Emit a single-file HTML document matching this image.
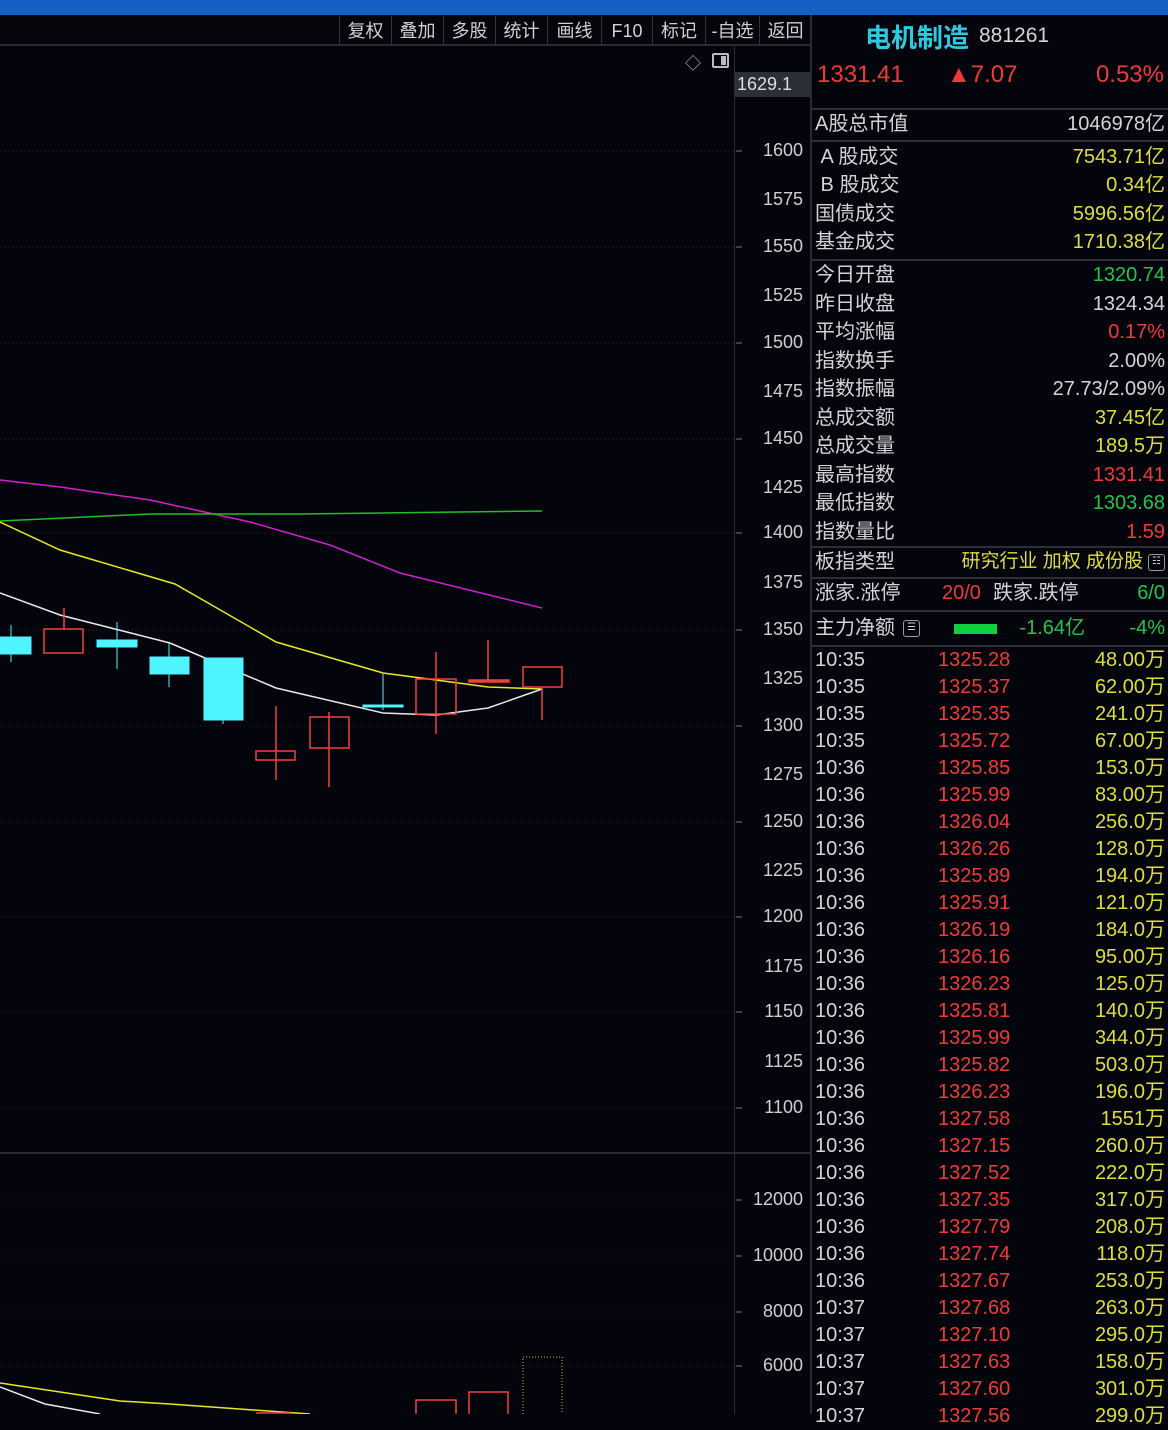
<!DOCTYPE html>
<html><head><meta charset="utf-8"><style>
*{margin:0;padding:0;box-sizing:border-box}
body{width:1168px;height:1414px;background:#04050c;overflow:hidden;position:relative;font-family:"Liberation Sans","Noto Sans CJK SC",sans-serif;color:#d4d4d4}
.a{position:absolute;white-space:nowrap}
.r{position:absolute;left:815px;width:350px;height:28px;font-size:20px;line-height:28px}
.r .l{position:absolute;left:0}
.r .v{position:absolute;right:0}
.y{color:#dede3a}.rd{color:#f03a3a}.g{color:#22c44a}
.tb{position:absolute;top:16px;height:30px;font-size:18px;line-height:30px;color:#d0d0d0;border-left:1px solid #333;text-align:center}
.ax{position:absolute;right:365px;font-size:18px;color:#cfcfcf}
.hl{position:absolute;left:812px;width:356px;height:2px;background:#2e2e36}
</style></head><body>
<div class="a" style="left:0;top:0;width:1168px;height:15px;background:#1560c3"></div>
<div class="a" style="left:0;top:15px;width:812px;height:31px;background:#05060b;border-bottom:2px solid #2a2a30"></div>
<div class="tb" style="left:339px;width:52px">复权</div>
<div class="tb" style="left:391px;width:52px">叠加</div>
<div class="tb" style="left:443px;width:52px">多股</div>
<div class="tb" style="left:495px;width:52px">统计</div>
<div class="tb" style="left:547px;width:54px">画线</div>
<div class="tb" style="left:601px;width:51px">F10</div>
<div class="tb" style="left:652px;width:53px">标记</div>
<div class="tb" style="left:705px;width:54px">-自选</div>
<div class="tb" style="left:759px;width:53px;border-right:1px solid #333">返回</div>
<div class="a" style="left:734px;top:46px;width:1px;height:1368px;background:#2a2a30"></div>
<div class="a" style="left:810px;top:15px;width:2px;height:1399px;background:#2a2a30"></div>
<div class="a" style="left:0;top:1152px;width:810px;height:2px;background:#2a2a30"></div>
<div class="a" style="left:685px;top:50px;font-size:16px;color:#aaa">◇</div>
<div class="a" style="left:712px;top:53px;width:17px;height:15px;border:2px solid #bbb;border-radius:2px"><div style="position:absolute;right:1px;top:1px;width:5px;height:9px;background:#bbb"></div></div>
<div class="a" style="left:735px;top:72px;width:75px;height:25px;background:#2c2f36;font-size:18px;line-height:25px;padding-left:2px;color:#ddd">1629.1</div>
<svg class="a" style="left:0;top:0" width="812" height="1414">
<g stroke="#2a2a34" stroke-dasharray="1,3" stroke-width="1">
<line x1="0" x2="734" y1="151" y2="151"/><line x1="0" x2="734" y1="247" y2="247"/><line x1="0" x2="734" y1="343" y2="343"/><line x1="0" x2="734" y1="439" y2="439"/><line x1="0" x2="734" y1="533" y2="533"/><line x1="0" x2="734" y1="630" y2="630"/><line x1="0" x2="734" y1="726" y2="726"/><line x1="0" x2="734" y1="822" y2="822"/><line x1="0" x2="734" y1="917" y2="917"/><line x1="0" x2="734" y1="1012" y2="1012"/><line x1="0" x2="734" y1="1108" y2="1108"/>
<line x1="0" x2="734" y1="1200" y2="1200"/><line x1="0" x2="734" y1="1256" y2="1256"/><line x1="0" x2="734" y1="1312" y2="1312"/><line x1="0" x2="734" y1="1366" y2="1366"/>
</g>
<g stroke="#777" stroke-width="1">
<line x1="736" x2="742" y1="151" y2="151"/><line x1="736" x2="742" y1="247" y2="247"/><line x1="736" x2="742" y1="343" y2="343"/><line x1="736" x2="742" y1="439" y2="439"/><line x1="736" x2="742" y1="533" y2="533"/><line x1="736" x2="742" y1="630" y2="630"/><line x1="736" x2="742" y1="726" y2="726"/><line x1="736" x2="742" y1="822" y2="822"/><line x1="736" x2="742" y1="917" y2="917"/><line x1="736" x2="742" y1="1012" y2="1012"/><line x1="736" x2="742" y1="1108" y2="1108"/>
<line x1="736" x2="742" y1="1200" y2="1200"/><line x1="736" x2="742" y1="1256" y2="1256"/><line x1="736" x2="742" y1="1312" y2="1312"/><line x1="736" x2="742" y1="1366" y2="1366"/>
</g>
<polyline fill="none" stroke="#d020d0" stroke-width="1.5" points="0,480 60,487 150,500 250,522 330,545 400,573 542,608"/>
<polyline fill="none" stroke="#20c020" stroke-width="1.5" points="0,521 150,514 300,514 542,511"/>
<polyline fill="none" stroke="#e8e820" stroke-width="1.5" points="0,522 60,550 175,584 276,642 383,673 436,680 488,687 542,689"/>
<polyline fill="none" stroke="#e8e8e8" stroke-width="1.5" points="0,593 60,615 170,643 205,658 276,688 383,713 436,715 488,708 542,689"/>
<g fill="#4ef4ff" stroke="#4ef4ff">
<line x1="11" x2="11" y1="625" y2="662"/><rect x="0" y="637" width="31" height="17"/>
<line x1="117" x2="117" y1="622" y2="669"/><rect x="97" y="640" width="40" height="7"/>
<line x1="169" x2="169" y1="643" y2="687"/><rect x="150" y="657" width="39" height="17"/>
<line x1="223" x2="223" y1="658" y2="724"/><rect x="204" y="658" width="39" height="62"/>
<line x1="383" x2="383" y1="673" y2="710"/><rect x="363" y="705" width="40" height="2"/>
</g>
<g fill="none" stroke="#f04040" stroke-width="1.5">
<line x1="64" x2="64" y1="608" y2="629"/><rect x="44" y="629" width="39" height="24"/>
<line x1="276" x2="276" y1="706" y2="780"/><rect x="256" y="751" width="39" height="9"/>
<line x1="329" x2="329" y1="712" y2="787"/><rect x="310" y="717" width="39" height="31"/>
<line x1="436" x2="436" y1="652" y2="734"/><rect x="416" y="679" width="40" height="35"/>
<line x1="488" x2="488" y1="640" y2="682"/><rect x="469" y="680" width="40" height="2" fill="#f04040"/>
<line x1="542" x2="542" y1="687" y2="720"/><rect x="523" y="667" width="39" height="20"/>
</g>
<polyline fill="none" stroke="#e8e820" stroke-width="1.5" points="0,1383 120,1401 170,1404 310,1414"/>
<polyline fill="none" stroke="#e8e8e8" stroke-width="1.5" points="0,1387 45,1404 100,1414"/>
<g fill="none" stroke="#f04040" stroke-width="1.5"><rect x="257" y="1413" width="33" height="5"/><rect x="416" y="1400" width="40" height="20"/><rect x="469" y="1392" width="39" height="30"/></g>
<rect x="523" y="1357" width="39" height="60" fill="none" stroke="#c8c830" stroke-dasharray="1,2"/>
</svg>
<div class="ax" style="top:140px">1600</div><div class="ax" style="top:189px">1575</div><div class="ax" style="top:236px">1550</div><div class="ax" style="top:285px">1525</div><div class="ax" style="top:332px">1500</div><div class="ax" style="top:381px">1475</div><div class="ax" style="top:428px">1450</div><div class="ax" style="top:477px">1425</div><div class="ax" style="top:522px">1400</div><div class="ax" style="top:572px">1375</div><div class="ax" style="top:619px">1350</div><div class="ax" style="top:668px">1325</div><div class="ax" style="top:715px">1300</div><div class="ax" style="top:764px">1275</div><div class="ax" style="top:811px">1250</div><div class="ax" style="top:860px">1225</div><div class="ax" style="top:906px">1200</div><div class="ax" style="top:956px">1175</div><div class="ax" style="top:1001px">1150</div><div class="ax" style="top:1051px">1125</div><div class="ax" style="top:1097px">1100</div>
<div class="ax" style="top:1189px">12000</div><div class="ax" style="top:1245px">10000</div><div class="ax" style="top:1301px">8000</div><div class="ax" style="top:1355px">6000</div>

<div class="a" style="left:865px;top:18px;font-size:26px;color:#2ec8e0;font-weight:bold">电机制造</div>
<div class="a" style="left:979px;top:24px;font-size:21px;color:#d4d4d4">881261</div>
<div class="a rd" style="left:817px;top:61px;font-size:24px">1331.41</div>
<div class="a rd" style="left:947px;top:61px;font-size:24px">▲7.07</div>
<div class="a rd" style="right:4px;top:61px;font-size:24px">0.53%</div>
<div class="hl" style="top:108px"></div>
<div class="r" style="top:110px"><span class="l">A股总市值</span><span class="v">1046978亿</span></div>
<div class="hl" style="top:140px"></div>
<div class="r" style="top:143px"><span class="l">&nbsp;A 股成交</span><span class="v y">7543.71亿</span></div>
<div class="r" style="top:171px"><span class="l">&nbsp;B 股成交</span><span class="v y">0.34亿</span></div>
<div class="r" style="top:200px"><span class="l">国债成交</span><span class="v y">5996.56亿</span></div>
<div class="r" style="top:228px"><span class="l">基金成交</span><span class="v y">1710.38亿</span></div>
<div class="hl" style="top:259px"></div>
<div class="r" style="top:261px"><span class="l">今日开盘</span><span class="v g">1320.74</span></div>
<div class="r" style="top:290px"><span class="l">昨日收盘</span><span class="v">1324.34</span></div>
<div class="r" style="top:318px"><span class="l">平均涨幅</span><span class="v rd">0.17%</span></div>
<div class="r" style="top:347px"><span class="l">指数换手</span><span class="v">2.00%</span></div>
<div class="r" style="top:375px"><span class="l">指数振幅</span><span class="v">27.73/2.09%</span></div>
<div class="r" style="top:404px"><span class="l">总成交额</span><span class="v y">37.45亿</span></div>
<div class="r" style="top:432px"><span class="l">总成交量</span><span class="v y">189.5万</span></div>
<div class="r" style="top:461px"><span class="l">最高指数</span><span class="v rd">1331.41</span></div>
<div class="r" style="top:489px"><span class="l">最低指数</span><span class="v g">1303.68</span></div>
<div class="r" style="top:518px"><span class="l">指数量比</span><span class="v rd">1.59</span></div>
<div class="hl" style="top:546px"></div>
<div class="r" style="top:548px"><span class="l">板指类型</span><span class="v y" style="right:22px;font-size:19px">研究行业 加权 成份股</span><span class="v" style="top:6px;width:17px;height:17px;border:1px solid #999;border-radius:3px;font-size:10px;line-height:14px;text-align:center">☷</span></div>
<div class="hl" style="top:577px"></div>
<div class="r" style="top:579px"><span class="l">涨家.涨停</span><span class="v rd" style="right:auto;left:127px">20/0</span><span class="v" style="right:auto;left:178px">跌家.跌停</span><span class="v g">6/0</span></div>
<div class="hl" style="top:610px"></div>
<div class="r" style="top:614px"><span class="l">主力净额</span><span class="v" style="right:auto;left:88px;top:6px;width:17px;height:17px;border:1px solid #999;border-radius:3px;font-size:10px;line-height:14px;text-align:center">☰</span><span class="v" style="right:auto;left:139px;top:10px;width:43px;height:10px;background:#10d040"></span><span class="v g" style="right:80px">-1.64亿</span><span class="v g">-4%</span></div>
<div class="hl" style="top:645px"></div>
<div class="a" style="left:815px;top:647px;width:350px;font-size:20px;line-height:27px">
<div style="display:flex"><span style="width:123px">10:35</span><span class="rd" style="width:100px">1325.28</span><span class="y" style="flex:1;text-align:right">48.00万</span></div>
<div style="display:flex"><span style="width:123px">10:35</span><span class="rd" style="width:100px">1325.37</span><span class="y" style="flex:1;text-align:right">62.00万</span></div>
<div style="display:flex"><span style="width:123px">10:35</span><span class="rd" style="width:100px">1325.35</span><span class="y" style="flex:1;text-align:right">241.0万</span></div>
<div style="display:flex"><span style="width:123px">10:35</span><span class="rd" style="width:100px">1325.72</span><span class="y" style="flex:1;text-align:right">67.00万</span></div>
<div style="display:flex"><span style="width:123px">10:36</span><span class="rd" style="width:100px">1325.85</span><span class="y" style="flex:1;text-align:right">153.0万</span></div>
<div style="display:flex"><span style="width:123px">10:36</span><span class="rd" style="width:100px">1325.99</span><span class="y" style="flex:1;text-align:right">83.00万</span></div>
<div style="display:flex"><span style="width:123px">10:36</span><span class="rd" style="width:100px">1326.04</span><span class="y" style="flex:1;text-align:right">256.0万</span></div>
<div style="display:flex"><span style="width:123px">10:36</span><span class="rd" style="width:100px">1326.26</span><span class="y" style="flex:1;text-align:right">128.0万</span></div>
<div style="display:flex"><span style="width:123px">10:36</span><span class="rd" style="width:100px">1325.89</span><span class="y" style="flex:1;text-align:right">194.0万</span></div>
<div style="display:flex"><span style="width:123px">10:36</span><span class="rd" style="width:100px">1325.91</span><span class="y" style="flex:1;text-align:right">121.0万</span></div>
<div style="display:flex"><span style="width:123px">10:36</span><span class="rd" style="width:100px">1326.19</span><span class="y" style="flex:1;text-align:right">184.0万</span></div>
<div style="display:flex"><span style="width:123px">10:36</span><span class="rd" style="width:100px">1326.16</span><span class="y" style="flex:1;text-align:right">95.00万</span></div>
<div style="display:flex"><span style="width:123px">10:36</span><span class="rd" style="width:100px">1326.23</span><span class="y" style="flex:1;text-align:right">125.0万</span></div>
<div style="display:flex"><span style="width:123px">10:36</span><span class="rd" style="width:100px">1325.81</span><span class="y" style="flex:1;text-align:right">140.0万</span></div>
<div style="display:flex"><span style="width:123px">10:36</span><span class="rd" style="width:100px">1325.99</span><span class="y" style="flex:1;text-align:right">344.0万</span></div>
<div style="display:flex"><span style="width:123px">10:36</span><span class="rd" style="width:100px">1325.82</span><span class="y" style="flex:1;text-align:right">503.0万</span></div>
<div style="display:flex"><span style="width:123px">10:36</span><span class="rd" style="width:100px">1326.23</span><span class="y" style="flex:1;text-align:right">196.0万</span></div>
<div style="display:flex"><span style="width:123px">10:36</span><span class="rd" style="width:100px">1327.58</span><span class="y" style="flex:1;text-align:right">1551万</span></div>
<div style="display:flex"><span style="width:123px">10:36</span><span class="rd" style="width:100px">1327.15</span><span class="y" style="flex:1;text-align:right">260.0万</span></div>
<div style="display:flex"><span style="width:123px">10:36</span><span class="rd" style="width:100px">1327.52</span><span class="y" style="flex:1;text-align:right">222.0万</span></div>
<div style="display:flex"><span style="width:123px">10:36</span><span class="rd" style="width:100px">1327.35</span><span class="y" style="flex:1;text-align:right">317.0万</span></div>
<div style="display:flex"><span style="width:123px">10:36</span><span class="rd" style="width:100px">1327.79</span><span class="y" style="flex:1;text-align:right">208.0万</span></div>
<div style="display:flex"><span style="width:123px">10:36</span><span class="rd" style="width:100px">1327.74</span><span class="y" style="flex:1;text-align:right">118.0万</span></div>
<div style="display:flex"><span style="width:123px">10:36</span><span class="rd" style="width:100px">1327.67</span><span class="y" style="flex:1;text-align:right">253.0万</span></div>
<div style="display:flex"><span style="width:123px">10:37</span><span class="rd" style="width:100px">1327.68</span><span class="y" style="flex:1;text-align:right">263.0万</span></div>
<div style="display:flex"><span style="width:123px">10:37</span><span class="rd" style="width:100px">1327.10</span><span class="y" style="flex:1;text-align:right">295.0万</span></div>
<div style="display:flex"><span style="width:123px">10:37</span><span class="rd" style="width:100px">1327.63</span><span class="y" style="flex:1;text-align:right">158.0万</span></div>
<div style="display:flex"><span style="width:123px">10:37</span><span class="rd" style="width:100px">1327.60</span><span class="y" style="flex:1;text-align:right">301.0万</span></div>
<div style="display:flex"><span style="width:123px">10:37</span><span class="rd" style="width:100px">1327.56</span><span class="y" style="flex:1;text-align:right">299.0万</span></div>
</div>
</body></html>
